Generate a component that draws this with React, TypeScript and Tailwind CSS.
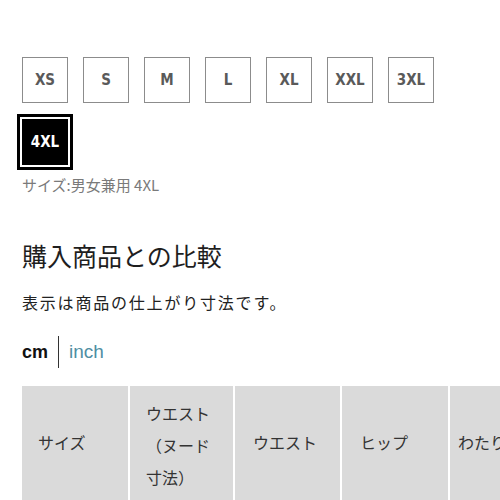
const sizes = ['XS', 'S', 'M', 'L', 'XL', 'XXL', '3XL'];

function SizeBox({ label, selected }: { label: string; selected?: boolean }) {
  if (selected) {
    return (
      <div className="flex h-[46px] w-[46px] items-center justify-center bg-black text-[15px] font-bold text-white shadow-[0_0_0_2px_#fff,0_0_0_5px_#000]">
        {label}
      </div>
    );
  }
  return (
    <div className="flex h-[46px] w-[46px] items-center justify-center border border-[#8c8c8c] bg-white text-[15px] font-bold text-[#5a5a5a]">
      {label}
    </div>
  );
}

export default function App() {
  return (
    <div className="h-[500px] w-[500px] overflow-hidden bg-white pl-[22px] pt-[57px] font-['Noto_Sans_CJK_JP',sans-serif]">
      <div className="flex w-[430px] flex-wrap gap-x-[15px] gap-y-[16px] font-['Liberation_Sans_Narrow','DejaVu_Sans_Condensed',sans-serif]">
        {sizes.map((s) => (
          <SizeBox key={s} label={s} />
        ))}
        <SizeBox label="4XL" selected />
      </div>

      <p className="mt-[10px] text-[15px] leading-[20px] text-[#7a7a7a]">サイズ:男女兼用 4XL</p>

      <h2 className="mt-[44px] text-[25px] leading-[32px] text-[#1e1e1e]">購入商品との比較</h2>

      <p className="mt-[19px] text-[16px] leading-[24px] tracking-[1.8px] text-[#222]">表示は商品の仕上がり寸法です。</p>

      <div className="mt-[22px] flex h-[32px] items-center font-['Liberation_Sans',sans-serif] text-[18px]">
        <span className="pr-[10px] font-bold text-[#111]">cm</span>
        <span className="h-[32px] border-l border-[#333]" />
        <span className="pl-[10px] text-[19px] text-[#4f8ea3]">inch</span>
      </div>

      <div className="mt-[18px] flex h-[118px] w-[600px] gap-[2px] text-[16px] text-[#333]">
        <div className="flex w-[106px] shrink-0 items-center bg-[#dadada] pb-[6px] pl-[16px]">サイズ</div>
        <div className="flex w-[103px] shrink-0 flex-col justify-center bg-[#dadada] px-[16px] leading-[32px]">
          <span>ウエスト</span>
          <span>（ヌード</span>
          <span>寸法）</span>
        </div>
        <div className="flex w-[105px] shrink-0 items-center bg-[#dadada] pb-[6px] pl-[18px]">ウエスト</div>
        <div className="flex w-[106px] shrink-0 items-center bg-[#dadada] pb-[6px] pl-[18px]">ヒップ</div>
        <div className="flex w-[106px] shrink-0 items-center bg-[#dadada] pb-[6px] pl-[8px]">わたり幅</div>
      </div>
    </div>
  );
}
